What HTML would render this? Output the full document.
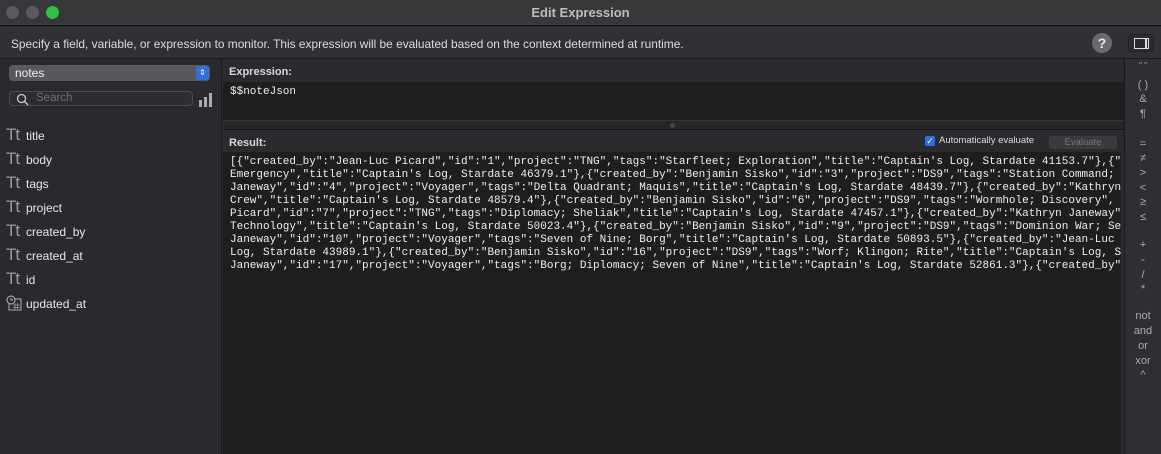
<!DOCTYPE html>
<html><head><meta charset="utf-8"><style>
*{margin:0;padding:0;box-sizing:border-box}
body{width:1161px;height:454px;overflow:hidden;background:#2b2b2f;font-family:"Liberation Sans",sans-serif;color:#ddd;position:relative}
.abs{position:absolute}
#title{left:0;top:0;width:1161px;height:26px;background:#38383b;border-bottom:1px solid #111}
#title .t{width:100%;text-align:center;top:5px;font-size:13px;font-weight:bold;color:#bdbdbd}
.dot{width:13px;height:13px;border-radius:50%;top:6px}
#desc{left:0;top:27px;width:1161px;height:32px;background:#313135;border-bottom:1px solid #1c1c1e;font-size:11.9px;color:#dcdcdc;padding:10px 0 0 11px}
#side{left:0;top:59px;width:222px;height:395px;background:#2a2a2e;border-right:1px solid #1a1a1a}
.pop{left:9px;top:6px;width:201px;height:16px;background:#59595d;border-radius:4px;font-size:12px;padding:1px 0 0 6px;color:#eee}
.pop .b{right:1px;top:1px;width:13px;height:14px;background:#2f6fe0;border-radius:3px;font-size:8px;text-align:center;line-height:14px;color:#fff}
.srch{left:9px;top:32px;width:184px;height:15px;border:1px solid #4a4a4e;border-radius:4px;background:#2d2d31;font-size:11.5px;color:#6e6e72;padding:0 0 0 26px;line-height:13px}
.row{left:6px;font-size:12px;color:#e6e6e6;height:20px}
.row .tt{display:inline-block;width:20px;font-size:17px;color:#9a9a9a;letter-spacing:-1px}
.lbl{font-size:11px;font-weight:bold;color:#d8d8d8}
#exp{left:223px;top:82px;width:902px;height:38px;background:#1e1e1f;font-family:"Liberation Mono",monospace;font-size:11px;color:#eee;padding:4px 0 0 7px}
#res{left:223px;top:152px;width:898px;height:302px;background:#1e1e1f;font-family:"Liberation Mono",monospace;font-size:11px;line-height:13px;color:#eee;padding:4px 0 0 7px;white-space:pre;overflow:hidden}
#ops{left:1124px;top:59px;width:37px;height:395px;background:#2f2f33;border-left:1px solid #1a1a1a;text-align:center;font-size:11px;color:#aaa}
#ops div{position:absolute;width:100%;left:0}
</style></head><body>
<div id="title" class="abs">
<div class="abs dot" style="left:6px;background:#5a5a5e"></div>
<div class="abs dot" style="left:26px;background:#5a5a5e"></div>
<div class="abs dot" style="left:46px;background:#2cc33f"></div>
<div class="abs t">Edit Expression</div>
</div>
<div id="desc" class="abs">Specify a field, variable, or expression to monitor. This expression will be evaluated based on the context determined at runtime.
<div class="abs" style="left:1092px;top:6px;width:20px;height:20px;border-radius:50%;background:#6a6a6e;color:#e8e8e8;font-size:14px;font-weight:bold;text-align:center;line-height:20px">?</div>
<div class="abs" style="left:1128px;top:7px;width:26px;height:18px;border:1px solid #222;border-radius:4px;background:#2b2b2f"><div class="abs" style="left:5px;top:3px;width:15px;height:11px;border:1.5px solid #ddd"></div><div class="abs" style="left:16px;top:3px;width:1.5px;height:11px;background:#ddd"></div></div>
</div>
<div id="side" class="abs">
<div class="abs pop">notes<div class="abs b">⇕</div></div>
<div class="abs srch">Search
<svg class="abs" style="left:6px;top:1px" width="13" height="13" viewBox="0 0 13 13"><circle cx="5.5" cy="5.5" r="4" stroke="#ccc" stroke-width="1.3" fill="none"/><path d="M8.5 8.5L12 12" stroke="#ccc" stroke-width="1.4"/></svg></div>
<svg class="abs" style="left:199px;top:34px" width="14" height="14"><rect x="0" y="7" width="3" height="7" fill="#aaa"/><rect x="5" y="4" width="3" height="10" fill="#aaa"/><rect x="10" y="0" width="3" height="14" fill="#aaa"/></svg>
<div class="abs row" style="top:66px"><span class="tt">Tt</span>title</div>
<div class="abs row" style="top:90px"><span class="tt">Tt</span>body</div>
<div class="abs row" style="top:114px"><span class="tt">Tt</span>tags</div>
<div class="abs row" style="top:138px"><span class="tt">Tt</span>project</div>
<div class="abs row" style="top:162px"><span class="tt">Tt</span>created_by</div>
<div class="abs row" style="top:186px"><span class="tt">Tt</span>created_at</div>
<div class="abs row" style="top:210px"><span class="tt">Tt</span>id</div>
<div class="abs row" style="top:234px"><span class="tt"><svg width="16" height="16" style="vertical-align:-3px"><rect x="3" y="4" width="12" height="11" fill="none" stroke="#aaa"/><circle cx="5" cy="5" r="4" fill="#2a2a2e" stroke="#bbb"/><path d="M5 3v2h2" stroke="#bbb" fill="none"/><path d="M7 10h7M7 12.5h7M9 8v6M11.5 8v6" stroke="#999" stroke-width=".8"/></svg></span>updated_at</div>
</div>
<div class="abs lbl" style="left:229px;top:66px">Expression:</div>
<div id="exp" class="abs">$$noteJson</div>
<div class="abs" style="left:223px;top:120px;width:902px;height:10px;background:#262628;border-top:1px solid #333;border-bottom:1px solid #151515"><div class="abs" style="left:447px;top:2px;width:5px;height:5px;border-radius:50%;background:#444"></div></div>
<div class="abs lbl" style="left:229px;top:137px">Result:</div>
<div class="abs" style="left:925px;top:136px;width:10px;height:10px;background:#2c6fe3;border-radius:2px;color:#fff;font-size:9px;line-height:10px;text-align:center">✓</div>
<div class="abs" style="left:939px;top:135px;font-size:9.5px;color:#ddd">Automatically evaluate</div>
<div class="abs" style="left:1049px;top:136px;width:68px;height:13px;background:#3b3b3e;border-radius:3px;font-size:9.5px;color:#777;text-align:center;line-height:13px">Evaluate</div>
<div id="res" class="abs">[{"created_by":"Jean-Luc Picard","id":"1","project":"TNG","tags":"Starfleet; Exploration","title":"Captain's Log, Stardate 41153.7"},{"
Emergency","title":"Captain's Log, Stardate 46379.1"},{"created_by":"Benjamin Sisko","id":"3","project":"DS9","tags":"Station Command; B
Janeway","id":"4","project":"Voyager","tags":"Delta Quadrant; Maquis","title":"Captain's Log, Stardate 48439.7"},{"created_by":"Kathryn
Crew","title":"Captain's Log, Stardate 48579.4"},{"created_by":"Benjamin Sisko","id":"6","project":"DS9","tags":"Wormhole; Discovery",
Picard","id":"7","project":"TNG","tags":"Diplomacy; Sheliak","title":"Captain's Log, Stardate 47457.1"},{"created_by":"Kathryn Janeway"
Technology","title":"Captain's Log, Stardate 50023.4"},{"created_by":"Benjamin Sisko","id":"9","project":"DS9","tags":"Dominion War; Se
Janeway","id":"10","project":"Voyager","tags":"Seven of Nine; Borg","title":"Captain's Log, Stardate 50893.5"},{"created_by":"Jean-Luc
Log, Stardate 43989.1"},{"created_by":"Benjamin Sisko","id":"16","project":"DS9","tags":"Worf; Klingon; Rite","title":"Captain's Log, S
Janeway","id":"17","project":"Voyager","tags":"Borg; Diplomacy; Seven of Nine","title":"Captain's Log, Stardate 52861.3"},{"created_by"</div>
<div id="ops" class="abs">
<div style="top:2px;font-size:8px">" "</div>
<div style="top:20px">( )</div>
<div style="top:34px">&amp;</div>
<div style="top:49px">¶</div>
<div style="top:79px">=</div>
<div style="top:93px">≠</div>
<div style="top:108px">&gt;</div>
<div style="top:123px">&lt;</div>
<div style="top:137px">≥</div>
<div style="top:152px">≤</div>
<div style="top:180px">+</div>
<div style="top:195px">-</div>
<div style="top:210px">/</div>
<div style="top:224px">*</div>
<div style="top:251px">not</div>
<div style="top:266px">and</div>
<div style="top:281px">or</div>
<div style="top:296px">xor</div>
<div style="top:310px">^</div>
</div>
</body></html>
